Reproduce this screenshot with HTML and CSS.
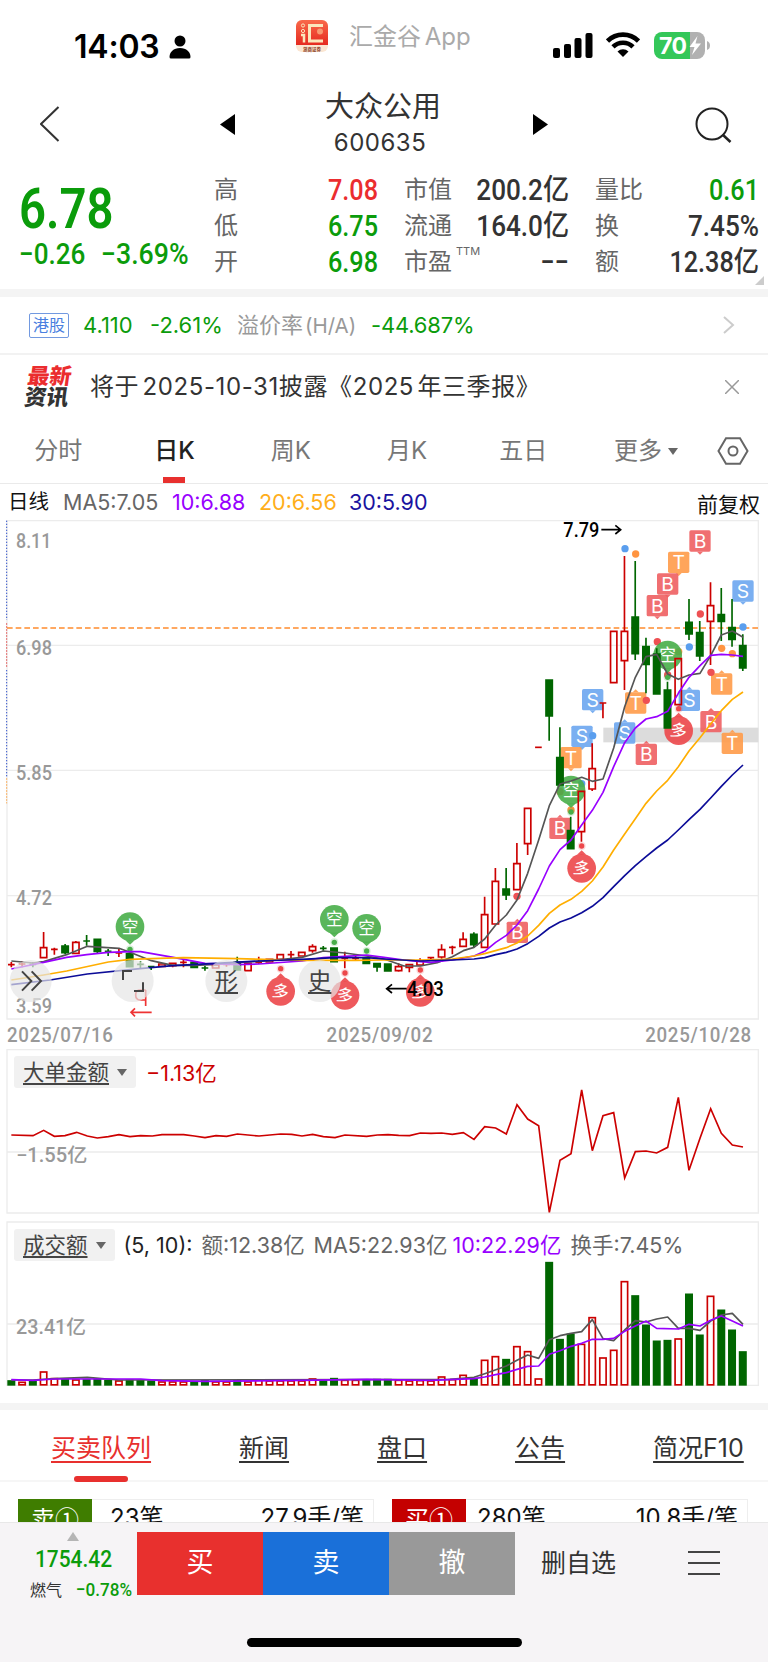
FILE: index.html
```
<!DOCTYPE html>
<html lang="zh-CN">
<head>
  <meta charset="UTF-8">
  <meta name="viewport" content="width=device-width, initial-scale=1.0">
  <title>大众公用 600635</title>
  <link rel="stylesheet" href="styles.css">
</head>
<body>
  <div class="status-bar">
    <div class="clock">14:03</div>
    <svg class="person" width="22" height="24" viewBox="0 0 22 24"><circle cx="11" cy="6" r="5.5"/><path d="M0.5 22c0-5 4-9 10.500-9s10.500 4 10.500 9q0 1.500-1.500 1.500h-18q-1.500 0-1.500-1.500z"/></svg>
    <svg class="app-logo" width="34" height="34" viewBox="0 0 34 34">
      <defs><linearGradient id="logo-red" x1="0" y1="0" x2="0" y2="1"><stop offset="0" stop-color="#f96a4b"/><stop offset="1" stop-color="#e52a20"/></linearGradient></defs>
      <rect x="1" width="32" height="32" rx="6" fill="#fbe6d2"/>
      <path d="M7 0h20a6 6 0 0 1 6 6v19H1V6a6 6 0 0 1 6-6z" fill="url(#logo-red)"/>
      <path d="M28 5.500H14.500v15.500H28" fill="none" stroke="#fbe7bd" stroke-width="3"/>
      <circle cx="8" cy="5.500" r="1.600" fill="none" stroke="#fbe7bd"/><circle cx="8" cy="11" r="1.600" fill="none" stroke="#fbe7bd"/>
      <path d="M6 15h3v7.500" fill="none" stroke="#fbe7bd" stroke-width="2.500"/>
      <circle cx="25" cy="11.500" r="3" fill="#f79a72"/>
      <text x="17" y="30.500" text-anchor="middle" font-size="4.500" font-weight="700" fill="#8b3a24">浙商证券</text>
    </svg>
    <div class="app-name">汇金谷 App</div>
    <svg class="signal" width="40" height="26" viewBox="0 0 40 26"><rect x="0" y="15" width="7" height="10" rx="2"/><rect x="11" y="11" width="7" height="14" rx="2"/><rect x="21.500" y="5" width="7" height="20" rx="2"/><rect x="32.500" y="0" width="7" height="25" rx="2"/></svg>
    <svg class="wifi" width="34" height="26" viewBox="0 0 34 26" fill="none" stroke="#000" stroke-width="4.600"><path d="M1.500 9a22 22 0 0 1 31 0"/><path d="M7 14.800a14.300 14.300 0 0 1 20 0"/><path d="M17 25l-5.500-5.500a8 8 0 0 1 11 0z" fill="#000" stroke="none"/></svg>
    <svg class="battery" width="58" height="28" viewBox="0 0 58 28">
      <path d="M8 0h28v27H8a8 8 0 0 1-8-8V8a8 8 0 0 1 8-8z" fill="#34c759"/>
      <path d="M36 0h7a8 8 0 0 1 8 8v11a8 8 0 0 1-8 8h-7z" fill="#b1b1b1"/>
      <path d="M53 9q3 1 3 4.500t-3 4.500z" fill="#b1b1b1"/>
      <text x="5" y="21.500" font-size="23" font-weight="700" fill="#fff" textLength="28">70</text>
      <path d="M43.500 4l-8 11h5l-2.500 8 9-11.500h-5.500z" fill="#fff"/>
    </svg>
  </div>

  <div class="title-bar">
    <svg width="20" height="36" viewBox="0 0 20 36"><path d="M18.500 1L1 18l17.500 17" fill="none" stroke="#333" stroke-width="2"/></svg>
    <svg class="prev" width="15" height="22" viewBox="0 0 15 22"><path d="M15 0v21L0 10.500z"/></svg>
    <div class="stock">
      <div class="stock-name">大众公用</div>
      <div class="stock-code">600635</div>
    </div>
    <svg class="next" width="15" height="22" viewBox="0 0 15 22"><path d="M0 0v21l15-10.500z"/></svg>
    <svg class="search" width="38" height="38" viewBox="0 0 38 38" fill="none" stroke="#222" stroke-width="2"><circle cx="17" cy="17" r="15.500"/><path d="M27.500 27.500l8 7.500" stroke-width="2.500"/></svg>
  </div>

  <div class="quote">
    <div class="price">
      <div class="last"><span class="din">6.78</span></div>
      <div class="change"><span class="din">−0.26</span><span class="din">−3.69%</span></div>
    </div>
    <div class="stats">
      <span>高</span><b class="din red">7.08</b><span>市值</span><b class="din wide">200.2亿</b><span>量比</span><b class="din green">0.61</b>
      <span>低</span><b class="din green">6.75</b><span>流通</span><b class="din wide">164.0亿</b><span>换</span><b class="din wide">7.45%</b>
      <span>开</span><b class="din green">6.98</b><span>市盈<sup>TTM</sup></span><b class="din dash">−−</b><span>额</span><b class="din">12.38亿</b>
    </div>
    <div class="corner"></div>
  </div>

  <div class="hk-row">
    <span class="hk-tag">港股</span>
    <span class="hk-price">4.110</span>
    <span class="hk-change">-2.61%</span>
    <span class="hk-label">溢价率<i>(H/A)</i></span>
    <span class="hk-premium">-44.687%</span>
    <svg width="12" height="18" viewBox="0 0 12 18"><path d="M1 1l9 8-9 8" fill="none" stroke="#ccc" stroke-width="2"/></svg>
  </div>

  <div class="news-row">
    <div class="news-logo"><span class="red">最新</span><span>资讯</span></div>
    <div class="news-text">将于 2025-10-31披露《2025 年三季报》</div>
    <svg width="14" height="14" viewBox="0 0 14 14"><path d="M0 0l14 14M14 0L0 14" stroke="#999" stroke-width="1.500"/></svg>
  </div>

  <div class="period-tabs">
    <span>分时</span>
    <span class="active">日K</span>
    <span>周K</span>
    <span>月K</span>
    <span>五日</span>
    <span>更多<i class="caret"></i></span>
    <svg width="32" height="28" viewBox="0 0 32 28" fill="none" stroke="#666" stroke-width="2"><path d="M9 1.200h14l7.500 12.800-7.500 12.800H9L1.500 14z"/><circle cx="16" cy="14" r="4.500"/></svg>
  </div>

  <div class="ma-row">
    <span class="ma-title">日线</span>
    <span class="ma5">MA5:7.05</span>
    <span class="ma10">10:6.88</span>
    <span class="ma20">20:6.56</span>
    <span class="ma30">30:5.90</span>
    <span class="adjust">前复权</span>
  </div>

  <!-- chart units are thirds of a css pixel -->
  <svg class="kline" viewBox="0 0 2304 1500">
    <path class="grid" d="M21 376H2275M21 751H2275M21 1127H2275M21 2H2275V1497H21z"/>
    <path d="M20 2V300M20 450V770" stroke="#3355cc" stroke-width="3" stroke-dasharray="4 5"/>
    <path d="M20 310V440" stroke="#dd3333" stroke-width="3" stroke-dasharray="4 5"/>
    <path d="M20 775V850" stroke="#ff9a2e" stroke-width="3" stroke-dasharray="4 5"/>
    <rect x="1810" y="623" width="465" height="44" fill="#dcdcdc"/>
    <path d="M21 324H2275" stroke="#ff8c2e" stroke-width="5" stroke-dasharray="17 9"/>
    <g class="axis">
      <text x="48" y="84" textLength="106" lengthAdjust="spacingAndGlyphs">8.11</text>
      <text x="48" y="405" textLength="108" lengthAdjust="spacingAndGlyphs">6.98</text>
      <text x="48" y="781" textLength="108" lengthAdjust="spacingAndGlyphs">5.85</text>
      <text x="48" y="1156" textLength="108" lengthAdjust="spacingAndGlyphs">4.72</text>
      <text x="48" y="1479" textLength="108" lengthAdjust="spacingAndGlyphs">3.59</text>
    </g>
    <g id="markers"></g>
    <g id="candles"></g>
    <g id="averages"></g>
    <g class="extreme">
      <text x="1690" y="50" textLength="108" lengthAdjust="spacingAndGlyphs">7.79</text>
      <text x="1221" y="1428" textLength="110" lengthAdjust="spacingAndGlyphs">4.03</text>
      <path d="M1804 29H1860M1846 16l16 13-16 13M1220 1406H1162M1176 1393l-16 13 16 13"/>
    </g>
    <path d="M437 1458v-48M437 1410h-16q-14 0-14 15t14 15h16M455 1477H393M405 1465l-12 12 12 12" fill="none" stroke="#ee3333" stroke-width="5"/>
    <g class="floats">
      <circle cx="92" cy="1383" r="63"/><circle cx="398" cy="1383" r="63"/><circle cx="679" cy="1383" r="63"/><circle cx="959" cy="1383" r="63"/>
      <path d="M66 1354l28 29-28 29M95 1354l28 29-28 29M369 1380v-27h27M429 1387v26h-27M644 1419h70M924 1419h70"/>
      <text x="679" y="1409">形</text>
      <text x="959" y="1409">史</text>
    </g>
  </svg>
  <div class="dates"><span class="din">2025/07/16</span><span class="din">2025/09/02</span><span class="din">2025/10/28</span></div>

  <div class="panel">
    <svg viewBox="0 27 2304 498">
      <path class="grid" d="M21 336H2275M21 29H2275V519H21z"/>
      <text class="axis" x="48" y="367" textLength="214" lengthAdjust="spacingAndGlyphs">−1.55亿</text>
      <polyline fill="none" stroke="#cc0000" stroke-width="5" points="34,285 99,287 131,271 163,289 195,287 230,277 262,288 292,294 325,290 357,284 390,290 422,287 457,288 486,284 551,284 583,288 615,293 648,287 680,289 712,282 777,288 842,282 875,283 906,288 938,283 970,290 1005,293 1035,285 1100,289 1132,285 1164,284 1196,286 1229,287 1261,279 1293,280 1325,279 1357,283 1390,278 1422,298 1454,260 1487,264 1519,282 1551,194 1583,237 1616,257 1648,517 1680,361 1713,341 1745,150 1777,332 1809,227 1841,218 1874,414 1906,335 1938,333 1970,339 2003,322 2035,172 2067,391 2100,295 2132,206 2164,280 2197,315 2229,321"/>
    </svg>
    <div class="panel-head">
      <span class="picker"><u>大单金额</u><i class="caret"></i></span>
      <span class="flow">−1.13亿</span>
    </div>
  </div>

  <div class="panel volume">
    <svg viewBox="0 543 2304 498">
      <path class="grid" d="M21 852H2275M21 546H2275V1036H21z"/>
      <text class="axis" x="48" y="882" textLength="210" lengthAdjust="spacingAndGlyphs">23.41亿</text>
      <g id="bars"></g>
      <polyline class="line5" points="34,1020 99,1020 163,1016 262,1012 357,1020 1350,1018 1422,1012 1454,1001 1519,978 1551,961 1583,945 1616,955 1648,899 1680,887 1713,880 1745,875 1777,839 1809,896 1841,902 1874,870 1906,842 1938,846 1970,837 2003,831 2035,865 2067,865 2100,871 2132,843 2164,825 2197,820 2229,853"/>
      <polyline class="line10" points="34,1019 99,1021 163,1017 422,1017 486,1022 615,1024 900,1021 1100,1018 1293,1021 1422,1016 1454,1011 1487,1004 1519,998 1551,988 1583,979 1616,978 1648,943 1680,932 1713,919 1745,910 1777,898 1809,898 1841,895 1874,874 1906,858 1938,843 1970,865 2035,867 2067,853 2100,858 2132,841 2164,828 2197,843 2229,858"/>
    </svg>
    <div class="panel-head">
      <span class="picker"><u>成交额</u><i class="caret"></i></span>
      <span class="params">(5, 10):</span>
      <span class="amount">额:12.38亿</span>
      <span class="vol5">MA5:22.93亿</span>
      <span class="vol10">10:22.29亿</span>
      <span class="turnover">换手:7.45%</span>
    </div>
  </div>

  <div class="info-tabs">
    <span class="active">买卖队列</span>
    <span>新闻</span>
    <span>盘口</span>
    <span>公告</span>
    <span>简况F10</span>
  </div>

  <div class="queue">
    <div class="queue-side sell"><b>卖①</b><span>23笔</span><span>27.9手/笔</span></div>
    <div class="queue-side buy"><b>买①</b><span>280笔</span><span>10.8手/笔</span></div>
  </div>

  <div class="footer">
    <div class="actions">
      <div class="index">
        <i class="up"></i>
        <div class="index-value"><span class="din">1754.42</span></div>
        <div class="index-name"><span>燃气</span><span class="din">−0.78%</span></div>
      </div>
      <div class="btn btn-buy">买</div>
      <div class="btn btn-sell">卖</div>
      <div class="btn btn-cancel">撤</div>
      <div class="remove">删自选</div>
      <svg width="32" height="26" viewBox="0 0 32 26"><path d="M0 2h32M0 13h32M0 24h32" stroke="#444" stroke-width="2.200"/></svg>
    </div>
    <div class="home-indicator"></div>
  </div>

  <script src="script.js"></script>
</body>
</html>
```
FILE: styles.css
```
* {
  box-sizing: border-box;
}

body {
  margin: 0;
  width: 768px;
  height: 1662px;
  overflow: hidden;
  background-color: #fff;
  color: #333;
  font-family: Inter, "Noto Sans CJK SC", sans-serif;
  font-size: 24px;
  line-height: 1;
}

svg {
  display: block;
  flex-shrink: 0;
}

span {
  white-space: nowrap;
}

i {
  font-style: normal;
}

.red {
  color: #eb2d2f !important;
}

.green {
  color: #0b9c0b !important;
}

.din {
  display: inline-block;
  font-family: Roboto, "Noto Sans CJK SC", sans-serif;
  font-weight: 500;
  transform: scaleX(0.87);
  transform-origin: left center;
}

/* status bar */
.status-bar {
  display: flex;
  height: 90px;
  padding-left: 74px;
  color: #000;
}

.clock {
  width: 86px;
  margin-top: 31px;
  font-size: 32px;
  font-weight: 600;
  letter-spacing: -0.2px;
  line-height: 32px;
}

.person {
  margin: 35px 0 0 9px;
}

.app-logo {
  margin: 20px 0 0 104px;
}

.app-name {
  width: 130px;
  margin: 23px 0 0 20px;
  color: #aaa;
  font-size: 24px;
  line-height: 28px;
  white-space: nowrap;
  word-spacing: -3px;
}

.signal {
  margin: 33px 0 0 74px;
}

.wifi {
  margin: 32px 0 0 13px;
}

.battery {
  margin: 32px 0 0 14px;
}

/* title */
.title-bar {
  display: flex;
  height: 80px;
  padding-left: 40px;
}

.title-bar > svg:first-child {
  margin-top: 16px;
}

.prev {
  margin: 24px 0 0 160px;
}

.stock {
  width: 290px;
  text-align: center;
}

.stock-name {
  padding-left: 6px;
  font-size: 29px;
  line-height: 34px;
}

.stock-code {
  margin-top: 5px;
  font-size: 24px;
  letter-spacing: 0.5px;
  line-height: 28px;
}

.next {
  margin: 24px 0 0 8px;
}

.search {
  margin: 17px 0 0 147px;
}

/* quote */
.quote {
  position: relative;
  display: flex;
  height: 127px;
  border-bottom: 8px solid #f4f4f4;
}

.price {
  width: 214px;
  padding-left: 19px;
  color: #0b9c0b;
}

.last {
  height: 67px;
  padding-top: 8px;
  font-size: 55px;
  line-height: 60px;
}

.last .din {
  font-weight: 600;
  transform: scaleX(0.86);
}

.change {
  display: flex;
  font-size: 29px;
  line-height: 34px;
}

.change .din {
  width: 82px;
  transform: scaleX(0.9);
}

.change .din:last-child {
  transform: scaleX(0.92);
}

.stats {
  display: grid;
  grid-template-columns: 66px 98px 60px 131px 60px 130px;
  grid-template-rows: 36px 36px 36px;
  padding-top: 2px;
  line-height: 36px;
}

.stats > span {
  margin-right: -30px;
  color: #666;
}

.stats > :nth-child(6n + 3),
.stats > :nth-child(6n + 5) {
  margin-left: 26px;
}

.stats .din {
  color: #333;
  font-size: 29px;
  text-align: right;
  transform-origin: right center;
  white-space: nowrap;
}

.stats .wide {
  transform: scaleX(0.9);
}

.stats sup {
  margin-left: 4px;
  font-size: 11px;
  line-height: 0;
  vertical-align: 15px;
}

.corner {
  position: absolute;
  right: 4px;
  bottom: 4px;
  border-left: 9px solid transparent;
  border-bottom: 9px solid #ccc;
}

/* h-share row */
.hk-row {
  display: flex;
  align-items: center;
  height: 58px;
  padding-left: 29px;
  border-bottom: 2px solid #f2f2f2;
  color: #0b9c0b;
  font-size: 22px;
}

.hk-tag {
  width: 40px;
  height: 25px;
  border: 1.500px solid #7299e0;
  border-radius: 2px;
  color: #4a7fe0;
  font-size: 16px;
  line-height: 22px;
  text-align: center;
}

.hk-price {
  width: 67px;
  margin-left: 14px;
}

.hk-change {
  width: 87px;
}

.hk-label {
  width: 134px;
  color: #999;
}

.hk-label i {
  margin-left: 2px;
  font-size: 20.500px;
}

.hk-premium {
  width: 352px;
  letter-spacing: -0.2px;
}

/* news row */
.news-row {
  display: flex;
  align-items: center;
  height: 63px;
  padding-left: 26px;
}

.news-logo {
  width: 65px;
  font-size: 22px;
  font-weight: 900;
  line-height: 21px;
  transform: skewX(-8deg);
}

.news-logo span {
  display: block;
}

.news-text {
  width: 635px;
  margin-left: -1px;
  letter-spacing: 0.6px;
  white-space: nowrap;
  word-spacing: -4px;
}

/* period tabs */
.period-tabs {
  display: grid;
  grid-template-columns: repeat(5, 116.300px) 129px 46px;
  align-items: center;
  justify-items: center;
  height: 66px;
  border-bottom: 1px solid #eaeaea;
  color: #777;
}

.period-tabs span {
  line-height: 66px;
}

.period-tabs .active {
  position: relative;
  color: #222;
  font-weight: 500;
}

.period-tabs .active::after {
  content: "";
  position: absolute;
  left: 50%;
  bottom: 1px;
  width: 22px;
  height: 6px;
  margin-left: -11px;
  background-color: #e8302e;
}

.caret {
  display: inline-block;
  margin-left: 6px;
  border: 5.500px solid transparent;
  border-top: 7px solid #666;
  border-bottom: 0;
  vertical-align: 4px;
}

/* moving averages */
.ma-row {
  display: flex;
  height: 36px;
  padding-left: 8px;
  font-size: 21.500px;
  line-height: 36px;
}

.ma-title {
  width: 55px;
  color: #111;
  font-size: 20.500px;
}

.ma5 {
  width: 109px;
  color: #666;
}

.ma10 {
  width: 87px;
  color: #9800ff;
}

.ma20 {
  width: 90px;
  color: #ffae1a;
}

.ma30 {
  width: 348px;
  color: #1a13a0;
}

.adjust {
  color: #111;
  font-size: 21px;
  line-height: 41px;
}

.kline {
  width: 768px;
  height: 500px;
}

.grid {
  fill: none;
  stroke: #ececec;
  stroke-width: 4;
}

.axis {
  fill: #999;
  font: 500 59px Roboto, "Noto Sans CJK SC", sans-serif;
}

.up-candle {
  fill: none;
  stroke: #cc0000;
  stroke-width: 5;
}

.down-candle {
  fill: #006600;
  stroke: #006600;
  stroke-width: 5;
}

.line5,
.line10,
.line20,
.line30 {
  fill: none;
  stroke-width: 5;
  stroke-linejoin: round;
}

.line5 {
  stroke: #555;
}

.line10 {
  stroke: #9800ff;
}

.line20 {
  stroke: #ffae00;
}

.line30 {
  stroke: #0c0c98;
}

.badge text {
  fill: #fff;
  font: 400 58px Inter, sans-serif;
  text-anchor: middle;
}

.pin text {
  fill: #fff;
  font: 400 50px "Noto Sans CJK SC", sans-serif;
  text-anchor: middle;
}

.extreme text {
  fill: #000;
  font: 500 62px Roboto, sans-serif;
}

.extreme path {
  fill: none;
  stroke: #000;
  stroke-width: 5;
}

.floats circle {
  fill: #e6e6e6;
  opacity: 0.7;
}

.floats path {
  fill: none;
  stroke: #444;
  stroke-width: 6;
}

.floats text {
  fill: #444;
  font: 400 70px "Noto Sans CJK SC", sans-serif;
  text-anchor: middle;
}

.dates {
  display: flex;
  justify-content: space-between;
  height: 29px;
  padding: 0 16px 0 7px;
  color: #999;
  font-size: 21px;
  line-height: 31px;
}

.dates .din {
  letter-spacing: 0.8px;
  transform: scaleX(0.89);
}

.dates .din:nth-child(2) {
  transform-origin: center;
}

.dates .din:last-child {
  transform-origin: right center;
}

/* indicator panels */
.panel {
  display: grid;
  height: 172px;
}

.panel > * {
  grid-area: 1 / 1;
}

.panel svg {
  width: 768px;
  height: 166px;
}

.panel-head {
  display: flex;
  height: 32px;
  margin: 7px 0 0 14px;
  color: #666;
  font-size: 21.500px;
  line-height: 34px;
}

.volume .panel-head {
  margin-top: 8px;
  line-height: 33px;
}

.picker {
  height: 32px;
  padding: 0 9px;
  border-radius: 3px;
  background-color: #f1f1f1;
  color: #444;
  line-height: 32px;
}

.picker u {
  text-underline-offset: 3px;
  text-decoration-thickness: 1.500px;
}

.picker .caret {
  margin-left: 8px;
}

.flow {
  margin-left: 10px;
  color: #cc0000;
}

.params {
  width: 78px;
  margin-left: 9px;
  color: #222;
}

.amount {
  width: 112px;
}

.vol5 {
  width: 139px;
}

.vol10 {
  width: 118px;
  color: #9800ff;
}

.volume {
  height: 182px;
}

/* info tabs */
.info-tabs {
  display: flex;
  gap: 88px;
  height: 79px;
  padding-left: 51px;
  border-top: 7px solid #f4f4f4;
  border-bottom: 2px solid #f6f6f6;
  font-size: 25px;
  line-height: 76px;
  text-decoration: underline;
  text-decoration-thickness: 1.500px;
  text-underline-offset: 4px;
}

.info-tabs .active {
  position: relative;
  color: #e8302e;
  text-decoration: underline;
  text-decoration-thickness: 1.500px;
}

.info-tabs .active::after {
  content: "";
  position: absolute;
  left: 23px;
  top: 66px;
  width: 54px;
  height: 6px;
  border-radius: 3px;
  background-color: #e8302e;
}

.queue {
  display: flex;
  gap: 18px;
  height: 40px;
  padding: 17px 18px 0;
  overflow: hidden;
}

.queue-side {
  display: flex;
  justify-content: space-between;
  width: 356px;
  height: 40px;
  padding-right: 9px;
  border: 1px solid #eee;
  color: #111;
  line-height: 36px;
}

.queue-side b {
  width: 74px;
  height: 40px;
  margin: -1px 0 0 -1px;
  background-color: #3f7d00;
  color: #fff;
  font-family: "Noto Sans CJK SC", sans-serif;
  font-weight: 400;
  line-height: 38px;
  text-align: center;
}

.queue-side span:nth-child(2) {
  flex: 1;
  padding-left: 18px;
}

.buy b {
  background-color: #c40000;
}

.buy span:nth-child(2) {
  padding-left: 11px;
}

/* footer */
.footer {
  height: 140px;
  border-top: 1px solid #e8e8e8;
  background-color: #f6f4f6;
}

.actions {
  display: flex;
  align-items: center;
  height: 73px;
  padding-top: 7px;
}

.index {
  width: 137px;
  height: 64px;
  padding-left: 30px;
}

.up {
  display: block;
  width: 0;
  margin: 1px 0 0 37px;
  border: 6.500px solid transparent;
  border-top: 0;
  border-bottom: 9px solid #b5b5b5;
}

.index-value {
  margin: 4px 0 0 5px;
  color: #0b9c0b;
  font-size: 24px;
  line-height: 28px;
}

.index-name {
  display: flex;
  font-size: 16px;
  line-height: 34px;
}

.index-name .din {
  margin-left: 14px;
  color: #0b9c0b;
  font-size: 19px;
  transform: scaleX(0.9);
}

.btn {
  width: 126px;
  height: 63px;
  color: #fff;
  font-size: 27px;
  line-height: 61px;
  text-align: center;
}

.btn-buy {
  background-color: #e8302e;
}

.btn-sell {
  background-color: #1a70d9;
}

.btn-cancel {
  background-color: #999;
}

.remove {
  width: 147px;
  margin-left: 26px;
  font-size: 25px;
}

.home-indicator {
  width: 275px;
  height: 9px;
  margin: 42px auto 0;
  border-radius: 5px;
  background-color: #000;
}
```
FILE: script.js
```
const SVG_NS = 'http://www.w3.org/2000/svg';
const STEP = 32.27;
const FIRST_X = 34;

// [direction, high, body top, body bottom, low]
const candles = [
  ['r', 1326, 1334, 1334, 1342], ['r', 1324, 1332, 1332, 1342], ['g', 1326, 1333, 1333, 1342], ['r', 1236, 1283, 1313, 1313],
  ['r', 1283, 1288, 1288, 1304], ['g', 1272, 1278, 1298, 1302], ['r', 1263, 1267, 1300, 1300], ['g', 1245, 1263, 1263, 1277],
  ['g', 1258, 1258, 1294, 1300], ['g', 1287, 1294, 1294, 1308], ['r', 1287, 1299, 1299, 1311], ['g', 1301, 1301, 1340, 1340],
  ['g', 1323, 1333, 1333, 1345], ['g', 1340, 1340, 1340, 1350], ['r', 1332, 1332, 1339, 1339], ['r', 1330, 1330, 1337, 1342],
  ['r', 1317, 1327, 1327, 1342], ['g', 1327, 1327, 1342, 1342], ['g', 1338, 1344, 1344, 1352], ['r', 1335, 1335, 1344, 1344],
  ['r', 1327, 1333, 1333, 1340], ['g', 1310, 1327, 1350, 1350], ['r', 1330, 1330, 1352, 1352], ['r', 1310, 1327, 1327, 1332],
  ['r', 1318, 1318, 1326, 1326], ['r', 1304, 1304, 1318, 1318], ['r', 1293, 1304, 1304, 1315], ['r', 1297, 1297, 1308, 1308],
  ['r', 1273, 1280, 1292, 1298], ['g', 1278, 1285, 1285, 1292], ['g', 1282, 1284, 1325, 1327], ['r', 1295, 1315, 1315, 1345],
  ['r', 1308, 1315, 1315, 1320], ['g', 1316, 1316, 1330, 1330], ['g', 1329, 1331, 1341, 1355], ['g', 1330, 1332, 1353, 1355],
  ['r', 1330, 1340, 1352, 1355], ['r', 1334, 1334, 1342, 1357], ['r', 1315, 1323, 1335, 1335], ['r', 1313, 1313, 1313, 1318],
  ['r', 1273, 1289, 1311, 1316], ['r', 1277, 1282, 1282, 1303], ['r', 1237, 1258, 1279, 1279], ['g', 1237, 1243, 1274, 1282],
  ['r', 1130, 1184, 1282, 1282], ['r', 1044, 1084, 1212, 1212], ['g', 1044, 1107, 1125, 1140], ['r', 969, 1031, 1109, 1109],
  ['r', 865, 865, 971, 1005], ['r', 682, 682, 682, 682], ['g', 478, 480, 588, 662], ['g', 622, 713, 795, 797],
  ['g', 890, 932, 986, 988], ['r', 812, 814, 935, 965], ['r', 670, 746, 807, 813], ['r', 549, 549, 549, 595],
  ['r', 334, 334, 488, 488], ['r', 108, 334, 422, 510], ['g', 123, 291, 401, 420], ['g', 353, 380, 433, 520],
  ['g', 385, 402, 522, 524], ['g', 485, 510, 624, 626], ['r', 416, 416, 554, 554], ['g', 237, 307, 342, 360],
  ['g', 303, 338, 408, 423], ['r', 187, 257, 304, 435], ['g', 204, 284, 304, 363], ['g', 237, 323, 358, 380],
  ['g', 343, 377, 444, 453]
];

const volumes = [
  14, 10, 14, 41, 21, 18, 17, 17, 18, 15, 14, 16, 15, 13, 11, 11, 11, 10, 14, 11, 11, 15, 11, 16, 14, 14, 14, 14, 20, 15,
  21, 16, 16, 16, 18, 18, 16, 14, 15, 14, 26, 18, 31, 21, 76, 87, 78, 117, 102, 20, 369, 138, 154, 124, 204, 83, 106, 312,
  269, 181, 133, 135, 140, 274, 151, 268, 226, 166, 101
];

const averages = {
  line5: '34,1323 99,1329 131,1325 200,1304 262,1279 357,1285 390,1297 454,1322 518,1336 583,1336 648,1333 712,1327 800,1323 906,1312 970,1293 1035,1299 1100,1308 1152,1317 1212,1338 1261,1338 1312,1328 1357,1310 1390,1292 1422,1282 1454,1257 1487,1215 1519,1185 1551,1140 1583,1060 1616,960 1648,857 1680,792 1713,783 1745,772 1777,784 1809,777 1841,684 1874,560 1906,472 1938,410 1970,403 2003,462 2035,478 2067,465 2100,460 2132,407 2164,345 2197,333 2229,352',
  line10: '34,1347 131,1327 200,1312 260,1304 325,1297 390,1295 422,1295 520,1312 615,1330 712,1334 777,1332 906,1323 970,1313 1035,1309 1100,1305 1152,1312 1212,1320 1261,1325 1293,1327 1357,1320 1422,1308 1454,1294 1487,1267 1519,1246 1551,1215 1583,1172 1616,1107 1648,1038 1680,989 1713,960 1745,915 1777,871 1809,817 1841,740 1874,668 1906,624 1938,597 1970,590 2003,574 2035,520 2067,472 2100,437 2132,406 2164,403 2197,405 2229,409',
  line20: '34,1380 131,1365 200,1353 325,1326 390,1318 454,1316 550,1313 712,1316 906,1321 1067,1321 1152,1320 1261,1320 1357,1317 1422,1308 1454,1301 1519,1283 1551,1269 1583,1248 1616,1216 1648,1180 1680,1155 1713,1138 1745,1114 1777,1083 1809,1041 1841,990 1874,942 1906,896 1938,850 1970,813 2003,781 2035,740 2067,693 2100,653 2132,612 2164,572 2197,538 2229,516',
  line30: '34,1394 150,1380 262,1362 420,1346 518,1337 648,1330 777,1323 906,1318 1003,1313 1100,1313 1152,1317 1261,1323 1357,1320 1422,1317 1454,1313 1487,1304 1519,1297 1551,1287 1583,1271 1616,1249 1648,1224 1680,1206 1713,1194 1745,1178 1777,1159 1809,1133 1841,1100 1874,1067 1906,1037 1938,1010 1970,984 2003,960 2035,930 2067,899 2100,868 2132,834 2164,799 2197,765 2229,735'
};

// [letter, x, y, pointer side]
const badges = [
  ['B', 2100, 63, 'down'], ['T', 2036, 127, 'down'], ['B', 2003, 192, 'down'], ['B', 1972, 257, 'down'],
  ['S', 2229, 213, 'down'], ['S', 1778, 539, 'down'], ['S', 1746, 649, 'down'], ['T', 1713, 713, 'down'],
  ['T', 1907, 549, 'up'], ['T', 2165, 492, 'up'], ['T', 2197, 670, 'up'], ['S', 1874, 639, 'up'],
  ['S', 2068, 541, 'up'], ['B', 1939, 703, 'up'], ['B', 2133, 605, 'up'], ['B', 1680, 925, 'up'], ['B', 1552, 1237, 'up']
];

const badgeColors = { B: '#ee5f62', S: '#6ba6f0', T: '#ff9b49' };

// [color, x, y]
const dots = [
  ['#5a9eee', 1875, 86], ['#5a9eee', 2068, 381], ['#5a9eee', 2229, 321], ['#5a9eee', 1778, 647], ['#5a9eee', 1745, 791],
  ['#ff9440', 1907, 102], ['#ff9440', 2165, 385], ['#ff9440', 2197, 401], ['#ff9440', 2036, 395], ['#ff9440', 1713, 870],
  ['#ee5053', 1972, 365], ['#ee5053', 2101, 282], ['#ee5053', 1939, 541], ['#ee5053', 2133, 457], ['#ee5053', 2003, 465],
  ['#ee5053', 1680, 815], ['#ee5053', 1551, 1129]
];

// [text, x, y, distance to its dot]
const pins = [
  ['空', 390, 1220, 68], ['空', 1003, 1198, 69], ['空', 1100, 1225, 68], ['空', 1713, 810, 66], ['空', 2003, 405, 67],
  ['多', 842, 1414, -68], ['多', 1035, 1426, -67], ['多', 1261, 1417, -67], ['多', 1745, 1045, -67], ['多', 2036, 632, -66]
];

function add(parent, name, attrs, text) {
  const el = document.createElementNS(SVG_NS, name);
  for (const key in attrs) {
    el.setAttribute(key, attrs[key]);
  }
  if (text) {
    el.textContent = text;
  }
  parent.appendChild(el);
  return el;
}

const candleLayer = document.getElementById('candles');
const barLayer = document.getElementById('bars');

candles.forEach(([dir, high, top, bottom, low], i) => {
  const x = FIRST_X + i * STEP;
  const cls = dir === 'r' ? 'up-candle' : 'down-candle';
  if (bottom - top < 4) {
    add(candleLayer, 'path', { class: cls, d: `M${x - 10} ${top}h20M${x} ${high}V${low}` });
  } else {
    add(candleLayer, 'path', { class: cls, d: `M${x} ${high}V${top}M${x} ${bottom}V${low}M${x - 9.5} ${top}h19V${bottom}h-19z` });
  }
  const h = volumes[i];
  // the first day is compared with a close that is off the chart
  const barCls = i === 0 ? 'down-candle' : cls;
  add(barLayer, 'rect', { class: barCls, x: x - 9.5, y: 1037 - h, width: 19, height: h - 2.5 });
});

for (const name in averages) {
  add(document.getElementById('averages'), 'polyline', { class: name, points: averages[name] });
}

const markerLayer = document.getElementById('markers');

badges.forEach(([letter, x, y, side]) => {
  const g = add(markerLayer, 'g', { class: 'badge' });
  const s = side === 'down' ? 1 : -1;
  const color = badgeColors[letter];
  add(g, 'path', { d: `M${x - 9} ${y + 32 * s}L${x} ${y + 41 * s}L${x + 9} ${y + 32 * s}z`, fill: color, opacity: 0.9 });
  add(g, 'rect', { x: x - 32, y: y - 32, width: 64, height: 64, rx: 5, fill: color, opacity: 0.9 });
  add(g, 'text', { x, y: y + 21 }, letter);
});

dots.forEach(([fill, cx, cy]) => add(markerLayer, 'circle', { cx, cy, r: 11, fill }));

pins.forEach(([word, x, y, gap]) => {
  const g = add(markerLayer, 'g', { class: 'pin' });
  const s = gap > 0 ? 1 : -1;
  const fill = gap > 0 ? '#48ae49' : '#ec474a';
  add(g, 'circle', { cx: x, cy: y + gap, r: 12, fill, opacity: 0.2 });
  add(g, 'circle', { cx: x, cy: y + gap, r: 8, fill });
  // round head with a short tip towards the dot
  add(g, 'circle', { cx: x, cy: y, r: 43, fill, opacity: 0.9 });
  add(g, 'path', { d: `M${x - 14} ${y + 40.6 * s}L${x} ${y + 54 * s}L${x + 14} ${y + 40.6 * s}z`, fill, opacity: 0.9 });
  add(g, 'text', { x, y: y + 18, transform: gap > 0 ? '' : `rotate(12 ${x} ${y})` }, word);
});
```
